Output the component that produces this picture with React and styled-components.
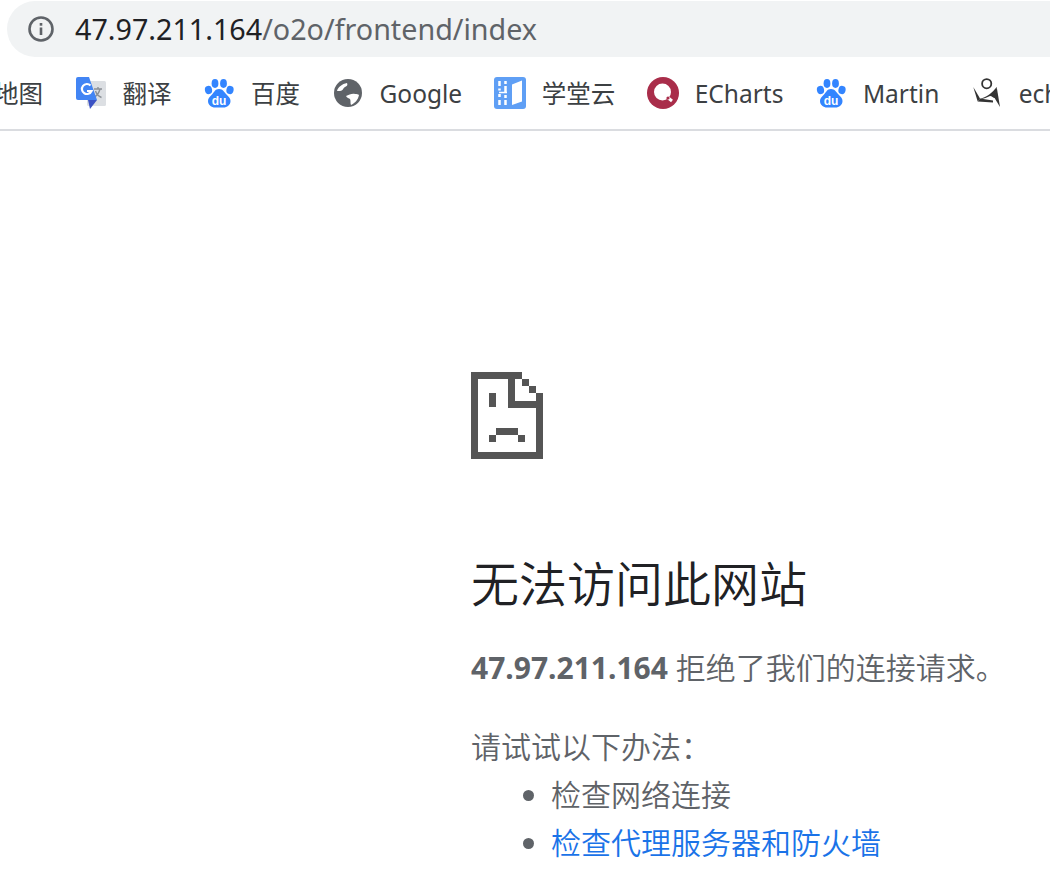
import React from "react";
import styled, { createGlobalStyle } from "styled-components";

const Global = createGlobalStyle`
  html, body { margin: 0; padding: 0; background: #fff; overflow: hidden; }
  body { width: 1050px; height: 871px; font-family: "Noto Sans", "Noto Sans CJK SC", sans-serif; }
`;
const Page = styled.div`width: 1050px; height: 871px; overflow: hidden;`;
const Omnibox = styled.div`
  display: flex; align-items: center; width: 1100px; height: 56px; margin: 1px 0 0 7px;
  padding-left: 21px; box-sizing: border-box; background: #f1f3f4; border-radius: 28px 0 0 28px;
`;
const Url = styled.div`margin-left: 21px; font-size: 28.7px; color: #5f6368; white-space: nowrap; line-height: 56px;`;
const Host = styled.span`color: #202124;`;
const BookmarkBar = styled.div`
  display: flex; align-items: center; gap: 31.5px; height: 72px; margin-left: -6px; width: 1100px;
  border-bottom: 2px solid #dadce0;
`;
const Bookmark = styled.div`display: flex; align-items: center; gap: 16px; flex: none;`;
const IconBox = styled.div`width: 32px; height: 32px; flex: none; svg { display: block; width: 32px; height: 32px; }`;
const Label = styled.span`font-size: 24.5px; color: #3c4043; white-space: nowrap; line-height: 32px; position: relative; top: 1px;`;
const Main = styled.main`padding: 241px 0 0 471px;`;
const SadIcon = styled.svg`display: block; width: 72px; height: 87px; shape-rendering: crispEdges;`;
const Title = styled.h1`margin: 95px 0 0; font-size: 48px; line-height: 60px; font-weight: 350; color: #202124; white-space: nowrap;`;
const Para = styled.p`margin: ${p => p.$top}px 0 0; font-size: 30px; line-height: 48px; color: #5f6368; white-space: nowrap; font-weight: 350;`;
const Strong = styled.strong`font-weight: 700;`;
const List = styled.ul`margin: 0; padding: 0 0 0 80px; font-size: 30px; line-height: 48px; color: #5f6368; font-weight: 350;`;
const Item = styled.li`white-space: nowrap;`;
const Link = styled.a`color: #1a73e8; text-decoration: none;`;

const BaiduIcon = () => (
  <svg viewBox="0 0 32 32">
    <g fill="#3385ff">
      <ellipse cx="5.5" cy="13" rx="3.6" ry="4.2" transform="rotate(-12 5.5 13)" />
      <ellipse cx="12" cy="6.5" rx="3.4" ry="4.4" />
      <ellipse cx="20.5" cy="6.5" rx="3.4" ry="4.4" />
      <ellipse cx="27" cy="13" rx="3.6" ry="4.2" transform="rotate(12 27 13)" />
      <path d="M16 12c4 0 5 3 7.5 5.5 2.5 2.5 4 4 4 6.5 0 4-3.500 6.500-7 6.500H12c-3.500 0-7-2.500-7-6.500 0-2.500 1.500-4 4-6.500C11.500 15 12 12 16 12z" />
    </g>
    <text x="16" y="28" textAnchor="middle" fontFamily="'Liberation Sans', sans-serif" fontWeight="700" fontSize="12" fill="#fff">du</text>
  </svg>
);
const TranslateIcon = () => (
  <svg viewBox="0 0 32 32">
    <rect x="12" y="4" width="19" height="25" rx="1.500" fill="#dcdfe3" />
    <path d="M19 12h8M23 10v2M25 12c-1 4-3.500 7-6 8M20.500 14c1 3 3.500 5.500 6 6.500" stroke="#8a9097" strokeWidth="1.400" fill="none" />
    <path d="M1 2a2 2 0 0 1 2-2h11l8 23H3a2 2 0 0 1-2-2z" fill="#4285f4" />
    <path d="M13 23h9l-7 9z" fill="#3b52c4" />
    <path d="M15.500 8.500a5 5 0 1 0 1 5.500h-4.500" stroke="#fff" strokeWidth="2.200" fill="none" />
  </svg>
);
const GlobeIcon = () => (
  <svg viewBox="0 0 32 32">
    <circle cx="16" cy="16" r="14" fill="#5f6368" />
    <path d="M5 14c1-4 5-7 10-8 1 2 0 3-2 4-2 1-2 4-5 4z" fill="#fff" />
    <path d="M14 19c3-1 6-3 9-2 2 0 3 0 4 1-1 5-4 8-8 10-1-2 0-4-1-6-1-1-3-1-4-3z" fill="#fff" />
  </svg>
);
const XuetangIcon = () => (
  <svg viewBox="0 0 32 32">
    <rect width="32" height="32" rx="3" fill="#5f9ff5" />
    <path d="M18 7.500l10-4v21l-10 3.500z" fill="#fff" />
    <path d="M5.500 4v5M5.500 11.500v2M5.500 17v3M5.500 23v5M11.500 4v3M11.500 9v7M11.500 18v3M11.500 23v5" stroke="#fff" strokeWidth="2.500" fill="none" />
    <path d="M5 15.500h8" stroke="#fff" strokeWidth="1.500" />
  </svg>
);
const EChartsIcon = () => (
  <svg viewBox="0 0 32 32">
    <circle cx="16" cy="16" r="16" fill="#a92d4a" />
    <circle cx="15.500" cy="15" r="8.500" fill="#fff" />
    <path d="M20 20l5 4" stroke="#fff" strokeWidth="3" />
    <circle cx="21" cy="21" r="1.600" fill="#a92d4a" />
  </svg>
);
const EchIcon = () => (
  <svg viewBox="0 0 32 32">
    <circle cx="15.700" cy="6.700" r="4.600" fill="none" stroke="#333" strokeWidth="1.800" />
    <path d="M2.300 10L9 21.500 6.700 24.500z" fill="#333" />
    <path d="M6.700 24.500L22 25.500V23.500L9 21.500z" fill="#333" />
    <path d="M9 22c7-2 13-7 16.700-12L24 21c-2 0-3-2-5-2-3 1-6 3-10 3z" fill="#333" />
    <path d="M25.700 10L29 30 23 20z" fill="#333" />
  </svg>
);
const InfoIcon = () => (
  <svg width="26" height="26" viewBox="0 0 26 26">
    <circle cx="13" cy="13" r="11.500" fill="none" stroke="#5f6368" strokeWidth="2.600" />
    <rect x="11.700" y="11.500" width="2.600" height="7.500" fill="#5f6368" />
    <rect x="11.700" y="7" width="2.600" height="2.700" fill="#5f6368" />
  </svg>
);
const SadTab = () => (
  <SadIcon viewBox="0 0 72 87" fill="#555">
    <rect x="0" y="0" width="51" height="7" />
    <rect x="0" y="0" width="7" height="87" />
    <rect x="0" y="80" width="72" height="7" />
    <rect x="65" y="21" width="7" height="66" />
    <rect x="37" y="0" width="7" height="36" />
    <rect x="37" y="29" width="35" height="7" />
    <rect x="51" y="7" width="7" height="7" />
    <rect x="58" y="14" width="7" height="7" />
    <rect x="18" y="21" width="7" height="14" />
    <rect x="25" y="56" width="22" height="7" />
    <rect x="18" y="63" width="7" height="7" />
    <rect x="47" y="63" width="7" height="7" />
  </SadIcon>
);

const bookmarks = [
  { label: "翻译", Icon: TranslateIcon },
  { label: "百度", Icon: BaiduIcon },
  { label: "Google", Icon: GlobeIcon },
  { label: "学堂云", Icon: XuetangIcon },
  { label: "ECharts", Icon: EChartsIcon },
  { label: "Martin", Icon: BaiduIcon },
  { label: "echarts", Icon: EchIcon },
];

export default function App() {
  return (
    <Page>
      <Global />
      <Omnibox>
        <InfoIcon />
        <Url><Host>47.97.211.164</Host>/o2o/frontend/index</Url>
      </Omnibox>
      <BookmarkBar>
        <Label>地图</Label>
        {bookmarks.map(({ label, Icon }) => (
          <Bookmark key={label}>
            <IconBox><Icon /></IconBox>
            <Label>{label}</Label>
          </Bookmark>
        ))}
      </BookmarkBar>
      <Main>
        <SadTab />
        <Title>无法访问此网站</Title>
        <Para $top={30}><Strong>47.97.211.164</Strong> 拒绝了我们的连接请求。</Para>
        <Para $top={31}>请试试以下办法：</Para>
        <List>
          <Item>检查网络连接</Item>
          <Item><Link href="#">检查代理服务器和防火墙</Link></Item>
        </List>
      </Main>
    </Page>
  );
}
